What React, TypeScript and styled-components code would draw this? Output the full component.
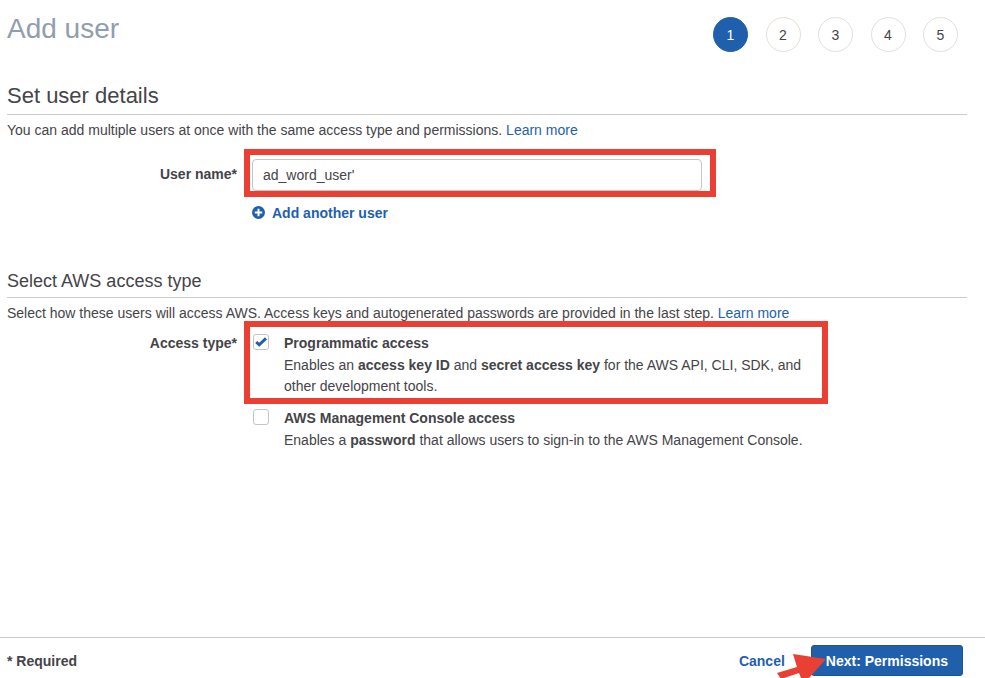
import React, { useState } from "react";
import styled, { createGlobalStyle } from "styled-components";

const ink = "#444449";
const blue = "#1f5fac";
const red = "#ea3f33";

const GlobalStyle = createGlobalStyle`
  * { box-sizing: border-box; }
  body {
    margin: 0;
    background: #fff;
    color: ${ink};
    font: 14px/22px "Liberation Sans", Arial, Helvetica, sans-serif;
  }
  button, input { font: inherit; color: inherit; }
`;

const Page = styled.div`
  min-height: 100vh;
  display: flex;
  flex-direction: column;
  overflow: hidden;
`;

const Main = styled.main`
  flex: 1;
  padding: 0 18px 0 7px;
`;

const Header = styled.header`
  display: flex;
  justify-content: space-between;
  align-items: flex-start;
  padding: 12px 9px 30px 0;
`;

const Title = styled.h1`
  margin: 0;
  font-size: 28px;
  line-height: 34px;
  font-weight: 400;
  color: #929dad;
`;

const Steps = styled.ol`
  display: flex;
  justify-content: space-between;
  width: 245px;
  margin: 5px 0 0;
  padding: 0;
  list-style: none;
`;

const Step = styled.li<{ $active?: boolean }>`
  width: 35px;
  height: 35px;
  border-radius: 50%;
  border: 1px solid ${(p) => (p.$active ? blue : "#e3dedb")};
  background: ${(p) => (p.$active ? blue : "#fff")};
  color: ${(p) => (p.$active ? "#fff" : ink)};
  line-height: 35px;
  text-align: center;
`;

const Heading = styled.h2<{ $small?: boolean }>`
  margin: 0;
  padding-bottom: ${(p) => (p.$small ? "2px" : "4px")};
  border-bottom: 1px solid #ccc;
  font-size: ${(p) => (p.$small ? "18px" : "22px")};
  line-height: 28px;
  font-weight: 400;
`;

const Intro = styled.p`
  margin: 0;
  padding-top: 4px;
`;

const Link = styled.a`
  color: ${blue};
  text-decoration: none;
`;

const Section = styled.section`
  & + & { margin-top: 43px; }
`;

const FieldRow = styled.div<{ $gap: number }>`
  display: grid;
  grid-template-columns: 230px minmax(0, 1fr);
  column-gap: 15px;
  padding-top: ${(p) => p.$gap}px;
`;

const FieldLabel = styled.label`
  font-weight: 700;
  line-height: 30px;
  text-align: right;
`;

const GroupLabel = styled.div`
  font-weight: 700;
  text-align: right;
`;

const Marked = styled.div`
  position: relative;
  width: fit-content;
`;

const Highlight = styled.div<{ $top: number; $right: number; $bottom: number }>`
  position: absolute;
  top: ${(p) => -p.$top}px;
  right: ${(p) => -p.$right}px;
  bottom: ${(p) => -p.$bottom}px;
  left: -8px;
  border: 6px solid ${red};
  pointer-events: none;
`;

const TextInput = styled.input`
  display: block;
  width: 450px;
  height: 32px;
  padding: 0 10px;
  border: 1px solid #c5c5c5;
  border-radius: 4px;
  background: #fff;
`;

const AddButton = styled.button`
  display: flex;
  align-items: center;
  gap: 6px;
  margin-top: 11px;
  padding: 0;
  border: 0;
  background: none;
  color: ${blue};
  font-weight: 700;
  cursor: pointer;
`;

const Option = styled.div`
  display: grid;
  grid-template-columns: 18px minmax(0, 1fr);
  column-gap: 14px;
  width: 562px;
`;

const OptionTitle = styled.label`
  font-weight: 700;
`;

const OptionText = styled.span`
  grid-column: 2;
  padding-top: 1px;
  line-height: 21px;
`;

const Options = styled.div`
  display: flex;
  flex-direction: column;
  gap: 10px;
`;

const CheckCell = styled.div`
  display: grid;
  width: 16px;
  height: 16px;
  margin: 2px 0 0 1px;
  & > * { grid-area: 1 / 1; }
  & > svg { pointer-events: none; }
`;

const CheckInput = styled.input`
  appearance: none;
  width: 16px;
  height: 16px;
  margin: 0;
  border: 1px solid #c5c5c5;
  border-radius: 3px;
  background: #fff;
`;

const Footer = styled.footer`
  display: flex;
  align-items: center;
  justify-content: space-between;
  height: 41px;
  padding: 5px 22px 0 7px;
  border-top: 1px solid #ccc;
`;

const Actions = styled.div`
  position: relative;
  display: flex;
  align-items: center;
  gap: 26px;
`;

const CancelButton = styled.button`
  padding: 0;
  border: 0;
  background: none;
  color: ${blue};
  font-weight: 700;
  cursor: pointer;
`;

const NextButton = styled.button`
  height: 31px;
  padding: 0 14px;
  border: 1px solid #1b5596;
  border-radius: 3px;
  background: ${blue};
  color: #fff;
  font-weight: 700;
  cursor: pointer;
`;

const Pointer = styled.svg`
  position: absolute;
  top: 8px;
  left: 38px;
  pointer-events: none;
`;

interface CheckOptionProps {
  id: string;
  title: string;
  initial?: boolean;
  children: React.ReactNode;
}

function CheckOption({ id, title, initial = false, children }: CheckOptionProps) {
  const [checked, setChecked] = useState(initial);
  return (
    <Option>
      <CheckCell>
        <CheckInput id={id} type="checkbox" checked={checked} onChange={(e) => setChecked(e.target.checked)} />
        {checked && (
          <svg width="16" height="16" viewBox="0 0 16 16" aria-hidden="true">
            <path d="M3.2 8 L6.2 10.8 L13 4.4" fill="none" stroke={blue} strokeWidth="3" />
          </svg>
        )}
      </CheckCell>
      <OptionTitle htmlFor={id}>{title}</OptionTitle>
      <OptionText>{children}</OptionText>
    </Option>
  );
}

export default function App() {
  const [name, setName] = useState("ad_word_user'");
  return (
    <Page>
      <GlobalStyle />
      <Main>
        <Header>
          <Title>Add user</Title>
          <Steps>
            {[1, 2, 3, 4, 5].map((n) => (
              <Step key={n} $active={n === 1} aria-current={n === 1 ? "step" : undefined}>{n}</Step>
            ))}
          </Steps>
        </Header>

        <Section>
          <Heading>Set user details</Heading>
          <Intro>
            You can add multiple users at once with the same access type and permissions. <Link href="#users">Learn more</Link>
          </Intro>
          <FieldRow $gap={18}>
            <FieldLabel htmlFor="user-name">User name*</FieldLabel>
            <div>
              <Marked>
                <TextInput id="user-name" value={name} onChange={(e) => setName(e.target.value)} />
                <Highlight $top={10} $right={14} $bottom={6} />
              </Marked>
              <AddButton type="button">
                <svg width="14" height="14" viewBox="0 0 14 14" aria-hidden="true">
                  <circle cx="6.5" cy="6.5" r="6.5" fill={blue} />
                  <path d="M6.5 2.8v7.4M2.8 6.5h7.4" stroke="#fff" strokeWidth="2" />
                </svg>
                Add another user
              </AddButton>
            </div>
          </FieldRow>
        </Section>

        <Section>
          <Heading as="h3" $small>Select AWS access type</Heading>
          <Intro>
            Select how these users will access AWS. Access keys and autogenerated passwords are provided in the last step. <Link href="#access">Learn more</Link>
          </Intro>
          <FieldRow $gap={8} role="group" aria-labelledby="access-type">
            <GroupLabel id="access-type">Access type*</GroupLabel>
            <Options>
              <Marked>
                <CheckOption id="programmatic" title="Programmatic access" initial>
                  Enables an <b>access key ID</b> and <b>secret access key</b> for the AWS API, CLI, SDK, and other development tools.
                </CheckOption>
                <Highlight $top={11} $right={14} $bottom={7} />
              </Marked>
              <CheckOption id="console" title="AWS Management Console access">
                Enables a <b>password</b> that allows users to sign-in to the AWS Management Console.
              </CheckOption>
            </Options>
          </FieldRow>
        </Section>
      </Main>

      <Footer>
        <b>* Required</b>
        <Actions>
          <CancelButton type="button">Cancel</CancelButton>
          <NextButton type="button">Next: Permissions</NextButton>
          <Pointer width="52" height="26" viewBox="0 0 52 26" aria-hidden="true">
            <path d="M16 1 L49 6 L32 25 L24 25 L22 20 L4 26 L0 20 L20 14 Z" fill={red} />
          </Pointer>
        </Actions>
      </Footer>
    </Page>
  );
}
